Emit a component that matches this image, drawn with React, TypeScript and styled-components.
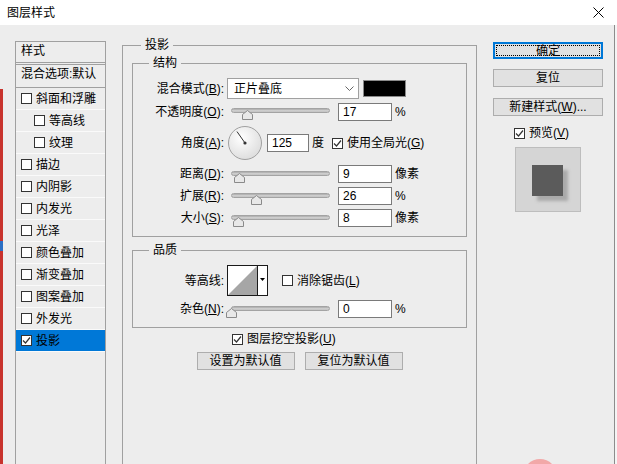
import React from "react"
import styled, { createGlobalStyle } from "styled-components"

const GlobalStyle = createGlobalStyle`
  html, body {
    margin: 0;
    padding: 0;
    background: #ededed;
  }
  body {
    font-family: "Liberation Sans", "Noto Sans CJK SC", sans-serif;
    font-size: 12px;
    color: #000;
  }
  * {
    box-sizing: border-box;
  }
`

const Window = styled.div`
  position: relative;
  width: 617px;
  height: 464px;
  overflow: hidden;
  background: #ededed;
  display: flex;
  flex-direction: column;
`

const TitleBar = styled.div`
  flex: none;
  height: 25px;
  background: #fff;
  display: flex;
  align-items: center;
  justify-content: space-between;
  padding: 0 13px 0 7px;
  line-height: 16px;
`

const Body = styled.div`
  flex: 1;
  min-height: 0;
  display: flex;
  align-items: flex-start;
  line-height: 16px;
`

const EdgeStrip = styled.div`
  flex: none;
  align-self: stretch;
  width: 3px;
  background: linear-gradient(#ededed 0 64px, #c8332d 64px, #c8332d 216px, #2b6fc4 216px, #2b6fc4 226px, #c8332d 226px);
`

const RightEdge = styled.div`
  flex: none;
  align-self: stretch;
  margin-left: auto;
  width: 3px;
  border-left: 1px solid #8c8c8c;
  background: #f4f4f4;
`

/* ---- left style list ---- */

const StyleList = styled.div`
  flex: none;
  margin: 16px 0 0 12px;
  width: 91px;
  height: 430px;
  border: 1px solid #a0a0a0;
  display: flex;
  flex-direction: column;
`

const ListHeader = styled.div`
  height: 23px;
  padding: 0 0 3px 5px;
  display: flex;
  align-items: center;
  border-bottom: 3px double #a0a0a0;
`

const BlendRow = styled.div`
  height: 23px;
  padding: 0 0 4px 5px;
  display: flex;
  align-items: center;
  white-space: nowrap;
  border-bottom: 1px solid #a0a0a0;
`

const EffectRow = styled.div<{ $indent: number; $active?: boolean }>`
  height: 22px;
  display: flex;
  align-items: center;
  gap: 4px;
  padding-left: ${(p) => p.$indent}px;
  border-bottom: 1px solid #fafafa;
  background: ${(p) => (p.$active ? "#0078d7" : "transparent")};
`

/* ---- shared bits ---- */

const Box = styled.span`
  flex: none;
  width: 11px;
  height: 11px;
  border: 1px solid #333;
  background: #fff;
  display: inline-flex;
  align-items: center;
  justify-content: center;
`

const Key = styled.span`
  text-decoration: underline;
  text-underline-offset: 1px;
`

const CheckLabel = styled.label<{ $ml?: number }>`
  display: inline-flex;
  align-items: center;
  gap: 4px;
  white-space: nowrap;
  margin-left: ${(p) => p.$ml ?? 0}px;
`

const Check = ({ checked }: { checked?: boolean }) => (
  <Box>
    {checked && (
      <svg width="9" height="9" viewBox="0 0 9 9">
        <polyline points="1,4.5 3.5,7 8,1.5" fill="none" stroke="#333" strokeWidth="1.2" />
      </svg>
    )}
  </Box>
)

/* ---- main panel ---- */

const Group = styled.fieldset<{ $w: number; $mt: number }>`
  flex: none;
  margin: ${(p) => p.$mt}px 0 0 0;
  padding: 0;
  min-width: 0;
  width: ${(p) => p.$w}px;
  border: 1px solid #a0a0a0;
`

const OuterGroup = styled(Group)`
  margin-left: 16px;
  padding: 0 9px;
  height: 440px;
`

const Legend = styled.legend<{ $ml: number }>`
  padding: 0 4px;
  margin-left: ${(p) => p.$ml}px;
  line-height: 16px;
`

const Rows = styled.div<{ $pt: number; $pb: number }>`
  padding: ${(p) => p.$pt}px 0 ${(p) => p.$pb}px 0;
`

const Row = styled.div<{ $h: number }>`
  height: ${(p) => p.$h}px;
  display: flex;
  align-items: center;
`

const Label = styled.span`
  flex: none;
  width: 91px;
  text-align: right;
  white-space: nowrap;
`

const Select = styled.div`
  flex: none;
  margin-left: 3px;
  width: 132px;
  height: 21px;
  background: #fff;
  border: 1px solid #a0a0a0;
  display: flex;
  align-items: center;
  justify-content: space-between;
  padding: 0 4px 0 6px;
`

const Swatch = styled.div`
  flex: none;
  margin-left: 4px;
  width: 43px;
  height: 17px;
  background: #000;
  border: 1px solid #8a8a8a;
`

const Field = styled.div<{ $w: number; $ml: number }>`
  flex: none;
  width: ${(p) => p.$w}px;
  height: 18px;
  margin-left: ${(p) => p.$ml}px;
  background: #fff;
  border: 1px solid #7a7a7a;
  padding-left: 4px;
  display: flex;
  align-items: center;
`

const Unit = styled.span`
  margin-left: 3px;
  white-space: nowrap;
`

const SliderWrap = styled.div`
  position: relative;
  flex: none;
  width: 107px;
  height: 12px;
  margin: 5px 0 0 3px;
`

const Track = styled.div`
  position: absolute;
  left: 4px;
  top: 0;
  width: 99px;
  height: 5px;
  border-radius: 3px;
  border: 1px solid #a3a3a3;
  background: linear-gradient(#a9a9a9, #d4d4d4 60%, #bdbdbd);
`

const Thumb = styled.svg`
  position: absolute;
  top: 2px;
`

const Slider = ({ value }: { value: number }) => (
  <SliderWrap>
    <Track />
    <Thumb width="11" height="10" viewBox="0 0 11 10" style={{ left: 4 + (value / 100) * 99 - 5.5 }}>
      <polygon points="0.5,4.5 5.5,0.5 10.5,4.5 10.5,9.5 0.5,9.5" fill="#e8e8e8" stroke="#8a8a8a" />
    </Thumb>
  </SliderWrap>
)

const Dial = styled.svg`
  flex: none;
  margin-left: 4px;
`

const ContourBox = styled.svg`
  flex: none;
  margin-left: 3px;
`

const KnockoutRow = styled.div`
  height: 18px;
  margin-top: 2px;
  padding-left: 100px;
  display: flex;
  align-items: center;
`

const ButtonRow = styled.div`
  margin-top: 4px;
  display: flex;
  justify-content: center;
  gap: 10px;
`

const Button = styled.div<{ $w: number; $mt?: number }>`
  width: ${(p) => p.$w}px;
  height: 18px;
  margin-top: ${(p) => p.$mt ?? 0}px;
  background: #e1e1e1;
  border: 1px solid #adadad;
  display: flex;
  align-items: center;
  justify-content: center;
  white-space: nowrap;
`

const PrimaryButton = styled(Button)`
  height: 17px;
  border: 2px solid #0078d7;
  outline: 1px dotted #000;
  outline-offset: -4px;
`

/* ---- right column ---- */

const RightColumn = styled.div`
  flex: none;
  width: 110px;
  margin: 17px 0 0 16px;
  display: flex;
  flex-direction: column;
`

const PreviewRow = styled.div`
  height: 16px;
  margin-top: 9px;
  padding-left: 21px;
  display: flex;
  align-items: center;
`

const PreviewBox = styled.div`
  width: 66px;
  height: 65px;
  margin: 6px 0 0 22px;
  background: #d5d5d5;
  border: 1px solid #bdbdbd;
  padding: 17px 0 0 16px;
`

const PreviewSquare = styled.div`
  width: 31px;
  height: 31px;
  background: #5b5b5b;
  box-shadow: 5px 5px 3px #aaaaaa;
`

const Blob = styled.div`
  position: absolute;
  left: 523px;
  top: 459px;
  width: 34px;
  height: 34px;
  border-radius: 50%;
  background: #f2a8a8;
`

const effects: { name: string; indent: number; checked?: boolean; active?: boolean }[] = [
  { name: "斜面和浮雕", indent: 5 },
  { name: "等高线", indent: 18 },
  { name: "纹理", indent: 18 },
  { name: "描边", indent: 5 },
  { name: "内阴影", indent: 5 },
  { name: "内发光", indent: 5 },
  { name: "光泽", indent: 5 },
  { name: "颜色叠加", indent: 5 },
  { name: "渐变叠加", indent: 5 },
  { name: "图案叠加", indent: 5 },
  { name: "外发光", indent: 5 },
  { name: "投影", indent: 5, checked: true, active: true },
]

const sliders = [
  { label: "距离", key: "D", value: 9, text: "9", unit: "像素" },
  { label: "扩展", key: "R", value: 26, text: "26", unit: "%" },
  { label: "大小", key: "S", value: 8, text: "8", unit: "像素" },
]

const angle = (125 * Math.PI) / 180

const App = () => {
  return (
    <Window>
      <GlobalStyle />
      <TitleBar>
        <span>图层样式</span>
        <svg width="11" height="11" viewBox="0 0 11 11">
          <path d="M0.5 0.5 L10.5 10.5 M10.5 0.5 L0.5 10.5" stroke="#000" strokeWidth="1" />
        </svg>
      </TitleBar>
      <Body>
        <EdgeStrip />
        <StyleList>
          <ListHeader>样式</ListHeader>
          <BlendRow>混合选项:默认</BlendRow>
          {effects.map((e) => (
            <EffectRow key={e.name} $indent={e.indent} $active={e.active}>
              <Check checked={e.checked} />
              <span>{e.name}</span>
            </EffectRow>
          ))}
        </StyleList>

        <OuterGroup $w={355} $mt={12}>
          <Legend $ml={9}>投影</Legend>
          <Group $w={335} $mt={2}>
            <Legend $ml={16}>结构</Legend>
            <Rows $pt={6} $pb={7}>
              <Row $h={23}>
                <Label>
                  混合模式(<Key>B</Key>):
                </Label>
                <Select>
                  <span>正片叠底</span>
                  <svg width="9" height="5" viewBox="0 0 9 5">
                    <polyline points="0.5,0.5 4.5,4.5 8.5,0.5" fill="none" stroke="#666" />
                  </svg>
                </Select>
                <Swatch />
              </Row>
              <Row $h={23}>
                <Label>
                  不透明度(<Key>O</Key>):
                </Label>
                <Slider value={17} />
                <Field $w={54} $ml={4}>17</Field>
                <Unit>%</Unit>
              </Row>
              <Row $h={40}>
                <Label>
                  角度(<Key>A</Key>):
                </Label>
                <Dial width="34" height="34" viewBox="0 0 34 34">
                  <defs>
                    <radialGradient id="dialFill" cx="40%" cy="35%" r="70%">
                      <stop offset="0" stopColor="#ffffff" />
                      <stop offset="1" stopColor="#dcdcdc" />
                    </radialGradient>
                  </defs>
                  <circle cx="17" cy="17" r="16.5" fill="url(#dialFill)" stroke="#a0a0a0" />
                  <line
                    x1="17"
                    y1="17"
                    x2={17 + 14 * Math.cos(angle)}
                    y2={17 - 14 * Math.sin(angle)}
                    stroke="#333"
                    strokeWidth="1"
                  />
                  <circle cx="17" cy="17" r="1.6" fill="#333" />
                </Dial>
                <Field $w={42} $ml={5}>125</Field>
                <Unit>度</Unit>
                <CheckLabel $ml={8}>
                  <Check checked />
                  <span>
                    使用全局光(<Key>G</Key>)
                  </span>
                </CheckLabel>
              </Row>
              {sliders.map((s) => (
                <Row $h={22} key={s.label}>
                  <Label>
                    {s.label}(<Key>{s.key}</Key>):
                  </Label>
                  <Slider value={s.value} />
                  <Field $w={54} $ml={4}>{s.text}</Field>
                  <Unit>{s.unit}</Unit>
                </Row>
              ))}
            </Rows>
          </Group>

          <Group $w={335} $mt={5}>
            <Legend $ml={16}>品质</Legend>
            <Rows $pt={5} $pb={7}>
              <Row $h={35}>
                <Label>等高线:</Label>
                <ContourBox width="41" height="31" viewBox="0 0 41 31">
                  <rect x="0.5" y="0.5" width="40" height="30" fill="#fff" stroke="#1a1a1a" />
                  <polygon points="1,30 30,1 30,30" fill="#a6a6a6" />
                  <line x1="30.5" y1="1" x2="30.5" y2="30" stroke="#1a1a1a" />
                  <polygon points="33,13 38,13 35.5,16" fill="#000" />
                </ContourBox>
                <CheckLabel $ml={14}>
                  <Check />
                  <span>
                    消除锯齿(<Key>L</Key>)
                  </span>
                </CheckLabel>
              </Row>
              <Row $h={22}>
                <Label>
                  杂色(<Key>N</Key>):
                </Label>
                <Slider value={0} />
                <Field $w={54} $ml={4}>0</Field>
                <Unit>%</Unit>
              </Row>
            </Rows>
          </Group>

          <KnockoutRow>
            <CheckLabel>
              <Check checked />
              <span>
                图层挖空投影(<Key>U</Key>)
              </span>
            </CheckLabel>
          </KnockoutRow>
          <ButtonRow>
            <Button $w={98}>设置为默认值</Button>
            <Button $w={98}>复位为默认值</Button>
          </ButtonRow>
        </OuterGroup>

        <RightColumn>
          <PrimaryButton $w={110}>确定</PrimaryButton>
          <Button $w={110} $mt={10}>
            复位
          </Button>
          <Button $w={110} $mt={11}>
            新建样式(<Key>W</Key>)...
          </Button>
          <PreviewRow>
            <CheckLabel>
              <Check checked />
              <span>
                预览(<Key>V</Key>)
              </span>
            </CheckLabel>
          </PreviewRow>
          <PreviewBox>
            <PreviewSquare />
          </PreviewBox>
        </RightColumn>
        <RightEdge />
      </Body>
      <Blob />
    </Window>
  )
}

export default App
